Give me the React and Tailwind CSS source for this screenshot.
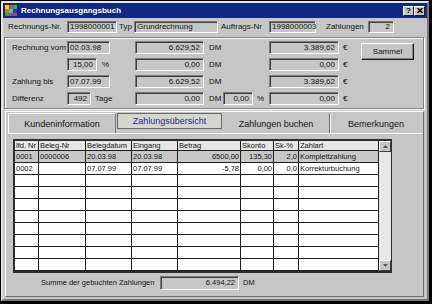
import React from "react";

const cols = [
  { h: "lfd. Nr", w: "w-[24px]" },
  { h: "Beleg-Nr", w: "w-[47px]" },
  { h: "Belegdatum", w: "w-[46px]" },
  { h: "Eingang", w: "w-[46px]" },
  { h: "Betrag", w: "w-[63px]", r: true },
  { h: "Skonto", w: "w-[33px]", r: true },
  { h: "Sk-%", w: "w-[25px]", r: true },
  { h: "Zahlart", w: "w-[80px]" },
];

const rows = [
  ["0001", "0000006", "20.03.98", "20.03.98", "6500,00", "135,30", "2,0", "Komplettzahlung"],
  ["0002", "", "07.07.99", "07.07.99", "-5,78", "0,00", "0,0", "Korrekturbuchung"],
  ...Array.from({ length: 8 }, () => ["", "", "", "", "", "", "", ""]),
];

function Field({ w, right, children }) {
  return (
    <div
      className={`${w} h-full shrink-0 flex items-center border border-t-[#7a7a7a] border-l-[#7a7a7a] border-r-white border-b-white shadow-[inset_1px_1px_0_#3c3c3c] ${
        right ? "justify-end pr-[3px]" : "pl-[2px]"
      }`}
    >
      {children}
    </div>
  );
}

function AppIcon() {
  return (
    <svg width="12" height="11" viewBox="0 0 12 11" className="shrink-0">
      <rect x="0" y="0" width="12" height="11" fill="#1e6cc8" />
      <rect x="0" y="0" width="4" height="4" fill="#f0d020" />
      <rect x="4" y="0" width="4" height="4" fill="#e84020" />
      <rect x="8" y="0" width="4" height="4" fill="#30b040" />
      <rect x="0" y="4" width="4" height="4" fill="#e07820" />
      <rect x="4" y="4" width="4" height="4" fill="#40c0e0" />
      <rect x="8" y="4" width="4" height="4" fill="#2040c0" />
      <rect x="0" y="8" width="6" height="3" fill="#28a050" />
      <rect x="6" y="8" width="6" height="3" fill="#d03060" />
    </svg>
  );
}

function TitleBtn({ children }) {
  return (
    <div className="w-[11px] h-[10px] flex items-center justify-center bg-[#c6c6c6] border border-t-white border-l-white border-r-[#202020] border-b-[#202020] text-[8px] font-bold leading-none text-black">
      {children}
    </div>
  );
}

function ScrollBtn({ up }) {
  return (
    <div className="h-[11px] flex items-center justify-center bg-[#c6c6c6] border border-t-white border-l-white border-r-[#404040] border-b-[#404040]">
      <svg width="5" height="3" viewBox="0 0 5 3">
        <path d={up ? "M0 3 L2.5 0 L5 3 Z" : "M0 0 L2.5 3 L5 0 Z"} fill="#555" />
      </svg>
    </div>
  );
}

function GroupRow({ label, b, c, d, e }) {
  return (
    <div className="h-[13px] flex items-center">
      <span className="w-[55px] shrink-0">{label}</span>
      <div className="w-[68px] h-full shrink-0 flex items-center">{b}</div>
      <Field w="w-[69px]" right>{c}</Field>
      <div className="w-[65px] h-full shrink-0 flex items-center">
        <span className="w-[19px] pl-[5px] shrink-0">DM</span>
        {d}
      </div>
      <Field w="w-[70px]" right>{e}</Field>
      <span className="w-[22px] pl-[4px] shrink-0">€</span>
    </div>
  );
}

export default function App() {
  return (
    <div className="w-[432px] h-[304px] bg-black pl-px pt-px pr-[3px] pb-[3px] font-['Liberation_Sans',Arial,sans-serif] text-[#141414]">
      <div className="w-full h-full flex flex-col bg-[#c6c6c6] border-2 border-t-[#e4e4e4] border-l-[#e4e4e4] border-r-[#787878] border-b-[#787878]">
        {/* title bar */}
        <div className="h-[15px] shrink-0 flex items-center bg-[#10287f] pl-[2px] pr-[2px]">
          <AppIcon />
          <span className="ml-[4px] text-[8px] font-bold text-white leading-none">Rechnungsausgangsbuch</span>
          <div className="ml-auto flex">
            <TitleBtn>?</TitleBtn>
            <TitleBtn>
              <svg width="6" height="5" viewBox="0 0 6 5">
                <path d="M0.5 0 L5.5 5 M5.5 0 L0.5 5" stroke="#000" strokeWidth="1.4" />
              </svg>
            </TitleBtn>
          </div>
        </div>

        {/* header row */}
        <div className="mt-[3px] h-[12px] shrink-0 flex items-center pl-[5px] text-[8px] leading-none">
          <span className="w-[59px] shrink-0">Rechnungs-Nr.</span>
          <Field w="w-[50px]">1998000001</Field>
          <span className="w-[17px] pl-[2px] shrink-0">Typ</span>
          <Field w="w-[84px]">Grundrechnung</Field>
          <span className="w-[51px] pl-[3px] shrink-0">Auftrags-Nr</span>
          <Field w="w-[47px]">1998000003</Field>
          <span className="w-[52px] pl-[10px] shrink-0">Zahlungen</span>
          <Field w="w-[26px]" right>2</Field>
        </div>

        {/* amounts group */}
        <div className="mt-[4px] ml-px mr-[3px] h-[72px] shrink-0 border border-[#808080] shadow-[inset_1px_1px_0_#fff,1px_1px_0_#fff] pt-[3px] pl-[7px] flex text-[8px] leading-none">
          <div className="flex flex-col gap-[4px]">
            <GroupRow
              label="Rechnung vom"
              b={<Field w="w-[43px]">02.03.98</Field>}
              c="6.629,52"
              e="3.389,62"
            />
            <GroupRow
              label=""
              b={
                <>
                  <Field w="w-[30px]" right>15,00</Field>
                  <span className="ml-[5px]">%</span>
                </>
              }
              c="0,00"
              e="0,00"
            />
            <GroupRow
              label="Zahlung bis"
              b={<Field w="w-[43px]">07.07.99</Field>}
              c="6.629,52"
              e="3.389,62"
            />
            <GroupRow
              label="Differenz"
              b={
                <>
                  <Field w="w-[24px]" right>492</Field>
                  <span className="ml-[4px]">Tage</span>
                </>
              }
              c="0,00"
              d={
                <>
                  <Field w="w-[30px]" right>0,00</Field>
                  <span className="ml-[4px]">%</span>
                </>
              }
              e="0,00"
            />
          </div>
          <button className="mt-[2px] w-[53px] h-[17px] shrink-0 self-start flex items-center justify-center bg-[#c6c6c6] border border-t-white border-l-white border-r-[#1a1a1a] border-b-[#1a1a1a] shadow-[inset_-1px_-1px_0_#808080] text-[8px] leading-none">
            Sammel
          </button>
        </div>

        {/* tab panel */}
        <div className="mt-[2px] ml-[2px] mr-[3px] h-[186px] shrink-0 flex flex-col border border-t-white border-l-white border-r-[#6e6e6e] border-b-[#6e6e6e]">
          <div className="mt-px ml-[2px] h-[21px] shrink-0 flex border-b border-white text-[9px] leading-none">
            <div className="w-[108px] shrink-0 flex items-center justify-center border-t border-l border-t-white border-l-white border-r border-r-[#7a7a7a] pt-[2px]">
              Kundeninformation
            </div>
            <div className="w-[107px] shrink-0 pl-px pr-px">
              <div className="h-[16px] flex items-center justify-center bg-[#d6d6d0] border border-[#6a6a6a] text-[#2a2a86]">
                Zahlungsübersicht
              </div>
            </div>
            <div className="w-[107px] shrink-0 flex items-center justify-center border-r border-[#6e6e6e] shadow-[1px_0_0_#fff] pt-[2px]">
              Zahlungen buchen
            </div>
            <div className="w-[92px] shrink-0 flex items-center justify-center pt-[2px]">Bemerkungen</div>
          </div>

          <div className="pl-[7px] pt-[5px] flex flex-col">
            {/* table */}
            <div className="w-[379px] flex border-t-2 border-l-2 border-b-2 border-r border-[#2e2e2e] text-[7.5px] leading-none">
              <div className="w-[364px] shrink-0 flex flex-col">
                <div className="h-[10px] flex bg-[#e6e6e6] border-b border-[#1e1e1e]">
                  {cols.map((c) => (
                    <div key={c.h} className={`${c.w} shrink-0 h-full border-r border-[#1e1e1e] pl-px flex items-center whitespace-nowrap overflow-hidden`}>
                      {c.h}
                    </div>
                  ))}
                </div>
                {rows.map((r, i) => (
                  <div key={i} className={`h-[12px] flex border-b border-[#1e1e1e] ${i === 0 ? "bg-[#c8c8c8]" : "bg-white"}`}>
                    {r.map((v, j) => (
                      <div
                        key={j}
                        className={`${cols[j].w} shrink-0 h-full border-r border-[#1e1e1e] flex items-center whitespace-nowrap overflow-hidden ${
                          cols[j].r ? "justify-end pr-px" : "pl-px"
                        }`}
                      >
                        {v}
                      </div>
                    ))}
                  </div>
                ))}
              </div>
              <div className="w-[12px] shrink-0 flex flex-col bg-[#e8e8e8]">
                <ScrollBtn up />
                <div className="flex-1" />
                <ScrollBtn />
              </div>
            </div>

            {/* sum */}
            <div className="mt-[3px] h-[14px] flex items-center pl-[28px] text-[7.5px] leading-none">
              <span className="w-[119px] shrink-0">Summe der gebuchten Zahlungen</span>
              <Field w="w-[79px]" right>6.494,22</Field>
              <span className="pl-[4px]">DM</span>
            </div>
          </div>
        </div>
      </div>
    </div>
  );
}
